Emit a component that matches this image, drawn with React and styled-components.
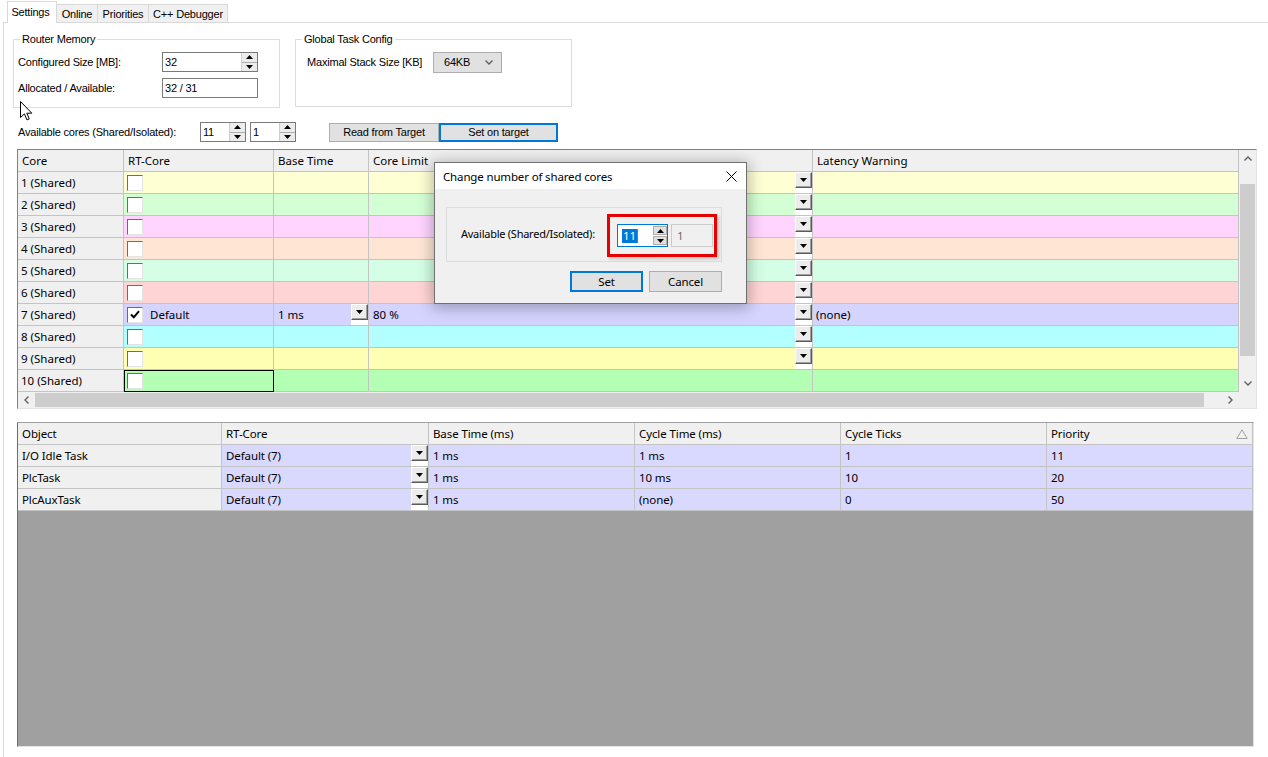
import React from "react";
import styled, { createGlobalStyle } from "styled-components";

const winFont = `"Liberation Sans", Arial, sans-serif`;
const uiFont = `"Noto Sans", "Open Sans", sans-serif`;

const GlobalStyle = createGlobalStyle`
  * { box-sizing: border-box; }
  html, body { margin: 0; padding: 0; background: #ffffff; }
  body { overflow: hidden; }
`;

const coreRows = [
  { core: "1 (Shared)", bg: "#ffffd4", drop: true },
  { core: "2 (Shared)", bg: "#d4ffd4", drop: true },
  { core: "3 (Shared)", bg: "#ffd4ff", drop: true },
  { core: "4 (Shared)", bg: "#ffe6d4", drop: true },
  { core: "5 (Shared)", bg: "#d4ffe6", drop: true },
  { core: "6 (Shared)", bg: "#ffd4d4", drop: true },
  {
    core: "7 (Shared)",
    bg: "#d4d4ff",
    drop: true,
    checked: true,
    rt: "Default",
    base: "1 ms",
    limit: "80 %",
    latency: "(none)",
  },
  { core: "8 (Shared)", bg: "#b3ffff", drop: true },
  { core: "9 (Shared)", bg: "#ffffb3", drop: true },
  { core: "10 (Shared)", bg: "#b3ffb3", selected: true },
];

const tasks = [
  { name: "I/O Idle Task", core: "Default (7)", base: "1 ms", cycle: "1 ms", ticks: "1", prio: "11" },
  { name: "PlcTask", core: "Default (7)", base: "1 ms", cycle: "10 ms", ticks: "10", prio: "20" },
  { name: "PlcAuxTask", core: "Default (7)", base: "1 ms", cycle: "(none)", ticks: "0", prio: "50" },
];

const TOP_COLS = "106px 150px 95px 444px 426px";
const BOTTOM_COLS = "204px 207px 206px 206px 206px 206px";

const Tri = ({ up }) => (
  <svg width="7" height="4" viewBox="0 0 7 4">
    <polygon points={up ? "0,4 7,4 3.5,0" : "0,0 7,0 3.5,4"} fill="#000" />
  </svg>
);

const Chevron = ({ dir }) => {
  const pts = {
    up: "0.5,4.5 4,1 7.5,4.5",
    down: "0.5,0.5 4,4 7.5,0.5",
    left: "4.5,0.5 1,4 4.5,7.5",
    right: "0.5,0.5 4,4 0.5,7.5",
  }[dir];
  const vertical = dir === "up" || dir === "down";
  return (
    <svg width={vertical ? 8 : 5} height={vertical ? 5 : 8} viewBox={vertical ? "0 0 8 5" : "0 0 5 8"}>
      <polyline points={pts} fill="none" stroke="#606060" strokeWidth="1.4" />
    </svg>
  );
};

const DropDown = () => (
  <DropSlot>
    <DropBtn>
      <Tri />
    </DropBtn>
  </DropSlot>
);

const Spin = ({ value, w, h, focus, boxed, pl, children }) => (
  <SpinBox $w={w} $h={h} $focus={focus} $pl={pl}>
    <SpinValue>{children || value}</SpinValue>
    <SpinButtons $boxed={boxed}>
      <SpinHalf $boxed={boxed}>
        <Tri up />
      </SpinHalf>
      <SpinHalf $boxed={boxed}>
        <Tri />
      </SpinHalf>
    </SpinButtons>
  </SpinBox>
);

export default function App() {
  return (
    <Window>
      <GlobalStyle />
      <TabStrip>
        <Tab $active $w={50}>Settings</Tab>
        <Tab $w={42}>Online</Tab>
        <Tab $w={52}>Priorities</Tab>
        <Tab $w={80}>C++ Debugger</Tab>
      </TabStrip>

      <Panel>
        <GroupRow>
          <GroupBox $w={267} $h={69} $pl={4}>
            <GroupTitle>Router Memory</GroupTitle>
            <FieldRow>
              <FieldLabel $w={144}>Configured Size [MB]:</FieldLabel>
              <Spin value="32" w={96} />
            </FieldRow>
            <FieldRow>
              <FieldLabel $w={144}>Allocated / Available:</FieldLabel>
              <TextBox $w={96}>32 / 31</TextBox>
            </FieldRow>
          </GroupBox>
          <GroupBox $w={277} $h={68} $pl={11}>
            <GroupTitle>Global Task Config</GroupTitle>
            <FieldRow>
              <FieldLabel $w={126}>Maximal Stack Size [KB]</FieldLabel>
              <Combo>
                <span>64KB</span>
                <Chevron dir="down" />
              </Combo>
            </FieldRow>
          </GroupBox>
        </GroupRow>

        <CoresRow>
          <FieldLabel $w={182}>Available cores (Shared/Isolated):</FieldLabel>
          <Spin value="11" w={46} />
          <SpinGap />
          <Spin value="1" w={46} />
          <WinButton $w={110} $ml={33}>Read from Target</WinButton>
          <WinButton $w={119} $default>Set on target</WinButton>
        </CoresRow>

        <TopGrid>
          <Table>
            <Row $cols={TOP_COLS}>
              <HeadCell>Core</HeadCell>
              <HeadCell>RT-Core</HeadCell>
              <HeadCell>Base Time</HeadCell>
              <HeadCell>Core Limit</HeadCell>
              <HeadCell>Latency Warning</HeadCell>
            </Row>
            {coreRows.map((r) => (
              <Row key={r.core} $cols={TOP_COLS}>
                <Cell $bg="#f0f0f0">{r.core}</Cell>
                <Cell $bg={r.bg} $selected={r.selected}>
                  <CheckBox>
                    {r.checked && (
                      <svg width="10" height="9" viewBox="0 0 10 9">
                        <polyline points="1,4.5 3.8,7.3 9,1.2" fill="none" stroke="#000" strokeWidth="2" />
                      </svg>
                    )}
                  </CheckBox>
                  {r.rt && <CellText $ml={7}>{r.rt}</CellText>}
                </Cell>
                <Cell $bg={r.bg} $pl={4}>
                  <CellText>{r.base}</CellText>
                  {r.base && <DropDown />}
                </Cell>
                <Cell $bg={r.bg} $pl={4}>
                  <CellText>{r.limit}</CellText>
                  {r.drop && <DropDown />}
                </Cell>
                <Cell $bg={r.bg} $pl={3}>
                  <CellText>{r.latency}</CellText>
                </Cell>
              </Row>
            ))}
          </Table>
          <VScroll>
            <ArrowBox $h={17}>
              <Chevron dir="up" />
            </ArrowBox>
            <VThumb />
            <Fill />
            <ArrowBox $h={17}>
              <Chevron dir="down" />
            </ArrowBox>
          </VScroll>
          <HScroll>
            <ArrowBox $w={17}>
              <Chevron dir="left" />
            </ArrowBox>
            <HThumb />
            <Fill />
            <ArrowBox $w={17}>
              <Chevron dir="right" />
            </ArrowBox>
          </HScroll>
          <Corner />
        </TopGrid>

        <BottomGrid>
          <Row $cols={BOTTOM_COLS}>
            <HeadCell>Object</HeadCell>
            <HeadCell>RT-Core</HeadCell>
            <HeadCell>Base Time (ms)</HeadCell>
            <HeadCell>Cycle Time (ms)</HeadCell>
            <HeadCell>Cycle Ticks</HeadCell>
            <HeadCell>
              <CellText>Priority</CellText>
              <SortGlyph width="12" height="10" viewBox="0 0 12 10">
                <polygon points="6,0.8 11.2,9.5 0.8,9.5" fill="none" stroke="#a0a0a0" />
              </SortGlyph>
            </HeadCell>
          </Row>
          {tasks.map((t) => (
            <Row key={t.name} $cols={BOTTOM_COLS}>
              <Cell $bg="#f0f0f0" $pl={4}>{t.name}</Cell>
              <Cell $bg="#d9d9ff" $pl={4}>
                <CellText>{t.core}</CellText>
                <DropDown />
              </Cell>
              <Cell $bg="#d9d9ff" $pl={4}>{t.base}</Cell>
              <Cell $bg="#d9d9ff" $pl={4}>{t.cycle}</Cell>
              <Cell $bg="#d9d9ff" $pl={4}>{t.ticks}</Cell>
              <Cell $bg="#d9d9ff" $pl={4}>{t.prio}</Cell>
            </Row>
          ))}
        </BottomGrid>
      </Panel>

      <Dialog>
        <TitleBar>
          <span>Change number of shared cores</span>
          <svg width="11" height="11" viewBox="0 0 11 11">
            <path d="M0.5 0.5 L10.5 10.5 M10.5 0.5 L0.5 10.5" stroke="#000" strokeWidth="1" />
          </svg>
        </TitleBar>
        <DialogBody>
          <InnerBox>
            <DialogLabel>Available (Shared/Isolated):</DialogLabel>
            <Highlight>
              <Spin w={51} h={23} focus boxed pl={4}>
                <Selected>11</Selected>
                <Caret />
              </Spin>
              <DisabledBox>1</DisabledBox>
            </Highlight>
          </InnerBox>
          <ButtonRow>
            <DialogButton $default>Set</DialogButton>
            <DialogButton>Cancel</DialogButton>
          </ButtonRow>
        </DialogBody>
      </Dialog>

      <Cursor width="13" height="20" viewBox="0 0 13 20">
        <path d="M0.5 0.5 V16.5 L4.4 12.9 L7 18.9 L9.3 17.9 L6.8 12.2 H11.8 Z" fill="#fff" stroke="#000" />
      </Cursor>
    </Window>
  );
}

const Window = styled.div`
  position: relative;
  width: 1268px;
  height: 757px;
  overflow: hidden;
  background: #fff;
  color: #000;
  font-family: ${winFont};
  font-size: 11px;
  letter-spacing: -0.2px;
`;

const TabStrip = styled.div`
  display: flex;
  align-items: flex-end;
  height: 22px;
  padding-left: 7px;
`;

const Tab = styled.div`
  position: relative;
  z-index: ${(p) => (p.$active ? 2 : 1)};
  width: ${(p) => p.$w}px;
  height: ${(p) => (p.$active ? 22 : 18)}px;
  margin-bottom: ${(p) => (p.$active ? -1 : 0)}px;
  margin-right: -1px;
  padding: ${(p) => (p.$active ? "0 3px 1px 0" : "1px 0 0")};
  display: flex;
  align-items: center;
  justify-content: center;
  background: ${(p) => (p.$active ? "#ffffff" : "#f0f0f0")};
  border: 1px solid #d9d9d9;
  border-bottom: none;
  white-space: nowrap;
`;

const Panel = styled.div`
  margin-left: 3px;
  height: 735px;
  border-top: 1px solid #d9d9d9;
  border-left: 1px solid #d9d9d9;
  padding-top: 16px;
`;

const GroupRow = styled.div`
  display: flex;
  align-items: flex-start;
  gap: 15px;
  margin-left: 9px;
`;

const GroupBox = styled.div`
  position: relative;
  width: ${(p) => p.$w}px;
  height: ${(p) => p.$h}px;
  border: 1px solid #dcdcdc;
  padding: 12px 0 0 ${(p) => p.$pl}px;
`;

const GroupTitle = styled.div`
  position: absolute;
  top: -7px;
  left: 6px;
  padding: 0 2px;
  line-height: 13px;
  background: #fff;
`;

const FieldRow = styled.div`
  display: flex;
  align-items: center;
  height: 20px;
  & + & {
    margin-top: 6px;
  }
`;

const FieldLabel = styled.span`
  flex: none;
  width: ${(p) => p.$w}px;
  white-space: nowrap;
`;

const TextBox = styled.div`
  flex: none;
  width: ${(p) => p.$w}px;
  height: 20px;
  display: flex;
  align-items: center;
  padding-left: 2px;
  background: #fff;
  border: 1px solid #7a7a7a;
`;

const SpinBox = styled.div`
  flex: none;
  width: ${(p) => p.$w}px;
  height: ${(p) => p.$h || 20}px;
  display: flex;
  align-items: center;
  padding-left: ${(p) => (p.$pl ? p.$pl : 2)}px;
  background: #fff;
  border: 1px solid ${(p) => (p.$focus ? "#0078d7" : "#7a7a7a")};
`;

const SpinValue = styled.span`
  flex: 1;
  display: flex;
  align-items: center;
`;

const SpinButtons = styled.div`
  flex: none;
  width: 16px;
  align-self: stretch;
  display: flex;
  flex-direction: column;
  gap: ${(p) => (p.$boxed ? 1 : 0)}px;
  padding: ${(p) => (p.$boxed ? "1px 0 1px 1px" : "0")};
  border-left: 1px solid ${(p) => (p.$boxed ? "#fff" : "#cfcfcf")};
  background: #fff;
`;

const SpinHalf = styled.div`
  flex: 1;
  display: flex;
  align-items: center;
  justify-content: center;
  background: ${(p) => (p.$boxed ? "#e1e1e1" : "#ececec")};
  border: ${(p) => (p.$boxed ? "1px solid #adadad" : "none")};
  & + & {
    border-top: 1px solid ${(p) => (p.$boxed ? "#adadad" : "#cfcfcf")};
  }
`;

const SpinGap = styled.span`
  width: 4px;
  flex: none;
`;

const Combo = styled.div`
  flex: none;
  width: 69px;
  height: 21px;
  display: flex;
  align-items: center;
  justify-content: space-between;
  padding: 0 8px 0 10px;
  background: #e1e1e1;
  border: 1px solid #adadad;
`;

const CoresRow = styled.div`
  display: flex;
  align-items: center;
  height: 20px;
  margin: 14px 0 0 14px;
`;

const WinButton = styled.div`
  flex: none;
  width: ${(p) => p.$w}px;
  height: 19px;
  margin-left: ${(p) => p.$ml || 0}px;
  display: flex;
  align-items: center;
  justify-content: center;
  background: #e1e1e1;
  border: 1px solid ${(p) => (p.$default ? "#0078d7" : "#adadad")};
  box-shadow: ${(p) => (p.$default ? "inset 0 0 0 1px #0078d7" : "none")};
`;

const TopGrid = styled.div`
  width: 1240px;
  height: 260px;
  margin: 7px 0 0 13px;
  display: grid;
  grid-template-columns: 1221px 17px;
  grid-template-rows: 242px 16px;
  border: 1px solid;
  border-color: #828282 #e3e3e3 #e3e3e3 #828282;
  font-family: ${uiFont};
  font-size: 11.5px;
  letter-spacing: 0;
`;

const Table = styled.div`
  display: flex;
  flex-direction: column;
  overflow: hidden;
`;

const Row = styled.div`
  flex: none;
  display: grid;
  grid-template-columns: ${(p) => p.$cols};
  height: 22px;
`;

const HeadCell = styled.div`
  display: flex;
  align-items: center;
  padding-left: 4px;
  background: #f0f0f0;
  border-right: 1px solid #c4c4c4;
  border-bottom: 1px solid #c4c4c4;
  white-space: nowrap;
  overflow: hidden;
`;

const Cell = styled.div`
  display: flex;
  align-items: center;
  padding-left: ${(p) => (p.$pl !== undefined ? p.$pl : 3)}px;
  background: ${(p) => p.$bg};
  border-right: 1px solid #c4c4c4;
  border-bottom: 1px solid #c4c4c4;
  white-space: nowrap;
  overflow: hidden;
  outline: ${(p) => (p.$selected ? "1px solid #000" : "none")};
  outline-offset: -1px;
`;

const CellText = styled.span`
  flex: 1;
  margin-left: ${(p) => p.$ml || 0}px;
`;

const CheckBox = styled.span`
  flex: none;
  width: 16px;
  height: 16px;
  display: flex;
  align-items: center;
  justify-content: center;
  background: #fff;
  border: 1px solid;
  border-color: #6d6d6d #e3e3e3 #e3e3e3 #6d6d6d;
`;

const DropSlot = styled.div`
  flex: none;
  width: 17px;
  align-self: stretch;
  background: #fff;
`;

const DropBtn = styled.div`
  height: 16px;
  display: flex;
  align-items: center;
  justify-content: center;
  background: #ececec;
  border: 1px solid;
  border-color: #ffffff #5a5a5a #5a5a5a #ffffff;
  box-shadow: inset -1px -1px 0 #a0a0a0;
`;

const VScroll = styled.div`
  display: flex;
  flex-direction: column;
  background: #f0f0f0;
`;

const HScroll = styled.div`
  display: flex;
  background: #f0f0f0;
`;

const ArrowBox = styled.div`
  flex: none;
  width: ${(p) => (p.$w ? `${p.$w}px` : "auto")};
  height: ${(p) => (p.$h ? `${p.$h}px` : "auto")};
  display: flex;
  align-items: center;
  justify-content: center;
`;

const VThumb = styled.div`
  flex: none;
  height: 172px;
  margin: 17px 1px 0;
  background: #cdcdcd;
`;

const HThumb = styled.div`
  flex: none;
  width: 1169px;
  margin: 1px 0;
  background: #cdcdcd;
`;

const Fill = styled.div`
  flex: 1;
`;

const Corner = styled.div`
  background: #f0f0f0;
`;

const BottomGrid = styled.div`
  width: 1237px;
  height: 325px;
  margin: 13px 0 0 13px;
  display: flex;
  flex-direction: column;
  background: #a0a0a0;
  border: 1px solid;
  border-color: #a0a0a0 #e3e3e3 #e3e3e3 #6d6d6d;
  font-family: ${uiFont};
  font-size: 11.5px;
  letter-spacing: -0.1px;
`;

const SortGlyph = styled.svg`
  flex: none;
  margin-right: 4px;
`;

const Dialog = styled.div`
  position: absolute;
  left: 434px;
  top: 162px;
  width: 313px;
  height: 142px;
  display: flex;
  flex-direction: column;
  background: #f0f0f0;
  border: 1px solid #707070;
  box-shadow: 0 2px 14px 2px rgba(0, 0, 0, 0.28);
  font-family: ${uiFont};
  font-size: 11.5px;
  letter-spacing: -0.15px;
`;

const TitleBar = styled.div`
  flex: none;
  height: 26px;
  display: flex;
  align-items: center;
  justify-content: space-between;
  padding: 0 9px 0 8px;
  background: #fff;
`;

const DialogBody = styled.div`
  flex: 1;
  padding: 18px 24px 0 11px;
`;

const InnerBox = styled.div`
  height: 55px;
  display: flex;
  align-items: center;
  padding-left: 14px;
  border: 1px solid #dcdcdc;
`;

const DialogLabel = styled.span`
  font-size: 11px;
  letter-spacing: -0.25px;
  margin-top: -2px;
`;

const Highlight = styled.div`
  width: 110px;
  height: 43px;
  margin: 2px 4px 0 auto;
  display: flex;
  align-items: center;
  padding-left: 7px;
  border: 3px solid #e60000;
  box-shadow: 2px 2px 3px rgba(0, 0, 0, 0.2);
`;

const Selected = styled.span`
  line-height: 14px;
  padding: 0 1px;
  background: #0078d7;
  color: #fff;
`;

const Caret = styled.span`
  width: 1px;
  height: 14px;
  background: #c8641e;
`;

const DisabledBox = styled.div`
  flex: none;
  width: 42px;
  height: 23px;
  margin-left: 3px;
  display: flex;
  align-items: center;
  padding-left: 5px;
  color: #6d6d6d;
  background: #f0f0f0;
  border: 1px solid #cccccc;
`;

const ButtonRow = styled.div`
  display: flex;
  justify-content: flex-end;
  gap: 6px;
  margin-top: 9px;
`;

const DialogButton = styled.div`
  width: 73px;
  height: 21px;
  display: flex;
  align-items: center;
  justify-content: center;
  background: #e1e1e1;
  border: 1px solid ${(p) => (p.$default ? "#0078d7" : "#adadad")};
  box-shadow: ${(p) => (p.$default ? "inset 0 0 0 1px #0078d7" : "none")};
`;

const Cursor = styled.svg`
  position: absolute;
  left: 20px;
  top: 101px;
`;
